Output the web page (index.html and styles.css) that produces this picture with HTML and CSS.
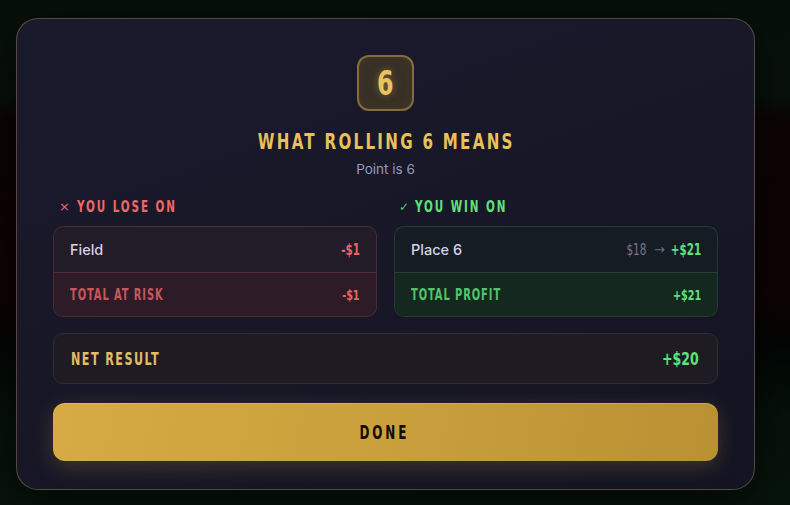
FILE: index.html
```html
<!DOCTYPE html>
<html lang="en">
<head>
<meta charset="utf-8">
<title>What rolling 6 means</title>
<link rel="stylesheet" href="styles.css">
</head>
<body>
<div class="backdrop">
  <div class="modal">
    <div class="die"><span class="cond die-num">6</span></div>
    <h1 class="title"><span class="cond title-text">WHAT ROLLING 6 MEANS</span></h1>
    <p class="subtitle">Point is 6</p>

    <div class="columns">
      <section class="col">
        <div class="col-head lose"><span class="mark">×</span><span class="cond head-text">YOU LOSE ON</span></div>
        <div class="card card-lose">
          <div class="row">
            <span class="bet">Field</span>
            <span class="cond amt red">-$1</span>
          </div>
          <div class="row total">
            <span class="cond total-label red-dim">TOTAL AT RISK</span>
            <span class="cond amt-sm red">-$1</span>
          </div>
        </div>
      </section>
      <section class="col">
        <div class="col-head win"><span class="mark">✓</span><span class="cond head-text">YOU WIN ON</span></div>
        <div class="card card-win">
          <div class="row">
            <span class="bet">Place 6</span>
            <span class="amt-wrap"><span class="cond stake">$18</span><span class="arrow">→</span><span class="cond amt green">+$21</span></span>
          </div>
          <div class="row total">
            <span class="cond total-label green-dim">TOTAL PROFIT</span>
            <span class="cond amt-sm green">+$21</span>
          </div>
        </div>
      </section>
    </div>

    <div class="net">
      <span class="cond net-label">NET RESULT</span>
      <span class="cond net-amt">+$20</span>
    </div>

    <button class="done"><span class="cond done-text">DONE</span></button>
  </div>
</div>
</body>
</html>
```

FILE: styles.css
```css
* { box-sizing: border-box; }

html, body {
  margin: 0;
  padding: 0;
  width: 790px;
  height: 505px;
  overflow: hidden;
}

body {
  font-family: Inter, "Noto Sans", sans-serif;
  background: #050b07;
}

.backdrop {
  width: 790px;
  height: 505px;
  padding: 18px 0 0 16px;
  background:
    linear-gradient(180deg,
      #06100a 0px,
      #071109 95px,
      #0c0404 120px,
      #0e0303 300px,
      #030605 345px,
      #06120a 420px,
      #07140b 505px);
}

.modal {
  width: 739px;
  height: 472px;
  border: 1px solid rgba(200, 170, 100, 0.35);
  border-radius: 22px;
  background: linear-gradient(160deg, #1a1a2d 0%, #171727 55%, #131322 100%);
  padding: 36px 36px 0 36px;
  display: flex;
  flex-direction: column;
  align-items: stretch;
  box-shadow: 0 10px 40px rgba(0,0,0,0.6);
}

/* condensed display type */
.cond {
  display: inline-block;
  font-family: "DejaVu Sans Condensed", "DejaVu Sans", sans-serif;
  font-weight: 700;
  transform-origin: left center;
  white-space: nowrap;
}

.die {
  align-self: center;
  width: 57px;
  height: 56px;
  border: 2px solid rgba(200, 160, 80, 0.55);
  border-radius: 12px;
  background: radial-gradient(circle at 50% 50%, #3d3428 0%, #332c24 100%);
  display: flex;
  align-items: center;
  justify-content: center;
  box-shadow: inset 0 0 14px rgba(236, 194, 94, 0.08);
}

.die-num {
  color: #ecc25e;
  font-size: 33px;
  line-height: 1;
  transform: scaleX(0.8);
  transform-origin: center;
  text-shadow: 0 0 8px rgba(236, 194, 94, 0.35);
}

.title {
  margin: 17px 0 0 0;
  text-align: center;
  font-size: 22px;
  line-height: 26px;
  font-weight: 700;
}

.title-text {
  color: #e9c05c;
  font-size: 22px;
  letter-spacing: 3px;
  padding-left: 1px;
  transform: scaleX(0.763);
  transform-origin: center;
}

.subtitle {
  margin: 5px 0 0 0;
  text-align: center;
  font-size: 13.5px;
  line-height: 18px;
  color: #9a98be;
}

.columns {
  margin-top: 21px;
  display: grid;
  grid-template-columns: 1fr 1fr;
  column-gap: 17px;
}

.col-head {
  line-height: 16px;
  height: 16px;
  padding-left: 6px;
  margin-bottom: 11px;
  display: flex;
  align-items: center;
}

.col-head .mark {
  font-family: "DejaVu Sans", sans-serif;
  font-size: 13px;
  margin-right: 7px;
}

.head-text {
  font-size: 15px;
  letter-spacing: 2.5px;
  transform: scaleX(0.77);
}

.col-head.lose { color: #ef6767; }
.col-head.win { color: #5fe27c; padding-left: 5px; }
.col-head.win .mark { font-size: 12px; color: #4fcf6a; margin-right: 6px; }

.card {
  border-radius: 10px;
  overflow: hidden;
}

.card-lose {
  border: 1px solid rgba(180, 80, 100, 0.28);
  background: #221b28;
}
.card-lose .total {
  background: #2d1c27;
  border-top: 1px solid rgba(180, 80, 100, 0.3);
}

.card-win {
  border: 1px solid rgba(70, 150, 100, 0.25);
  background: #151c24;
}
.card-win .total {
  background: #15281f;
  border-top: 1px solid rgba(70, 150, 100, 0.25);
}

.row {
  height: 45px;
  display: flex;
  align-items: center;
  justify-content: space-between;
  padding: 0 16px;
}

.row.total { height: 44px; }

.bet {
  font-size: 14.5px;
  font-weight: 500;
  color: #d6d2e6;
}

.amt {
  font-size: 16px;
  transform: scaleX(0.72);
  transform-origin: right center;
}

.amt-sm {
  font-size: 14.5px;
  transform: scaleX(0.74);
  transform-origin: right center;
}

.amt-wrap {
  display: flex;
  align-items: center;
}

.stake {
  font-family: "DejaVu Sans Condensed", "DejaVu Sans", sans-serif;
  font-weight: 400;
  font-size: 16px;
  color: #76758e;
  transform: scaleX(0.73);
  transform-origin: right center;
}

.arrow {
  font-family: "DejaVu Sans", sans-serif;
  font-size: 13px;
  color: #6a6980;
  margin: 0 -6px 0 8px;
}

.red { color: #f06262; }
.green { color: #5fe27c; }

.total-label {
  font-size: 15.5px;
  letter-spacing: 1.3px;
  transform: scaleX(0.71);
}
.red-dim { color: #c7575d; }
.green-dim { color: #52c46b; }

.net {
  margin-top: 16px;
  height: 51px;
  border: 1px solid #2f2d35;
  border-radius: 10px;
  background: #1e1c22;
  display: flex;
  align-items: center;
  justify-content: space-between;
  padding: 0 18px 0 18px;
}

.net-label {
  font-size: 17px;
  letter-spacing: 2px;
  color: #e3bd65;
  transform: scaleX(0.73);
  margin-left: -1px;
}

.net-amt {
  font-size: 17px;
  color: #5fe27c;
  transform: scaleX(0.82);
  transform-origin: right center;
}

.done {
  margin-top: 19px;
  height: 58px;
  border: none;
  border-radius: 12px;
  background: linear-gradient(100deg, #d6aa44 0%, #c9a03c 50%, #b99133 100%);
  box-shadow: 0 6px 22px rgba(212, 168, 67, 0.22), inset 0 1px 0 rgba(255, 230, 150, 0.25);
  cursor: pointer;
  padding: 0;
}

.done-text {
  color: #130e04;
  font-size: 19px;
  letter-spacing: 4px;
  margin-right: 2px;
  transform: scaleX(0.7);
  transform-origin: center;
}
```
